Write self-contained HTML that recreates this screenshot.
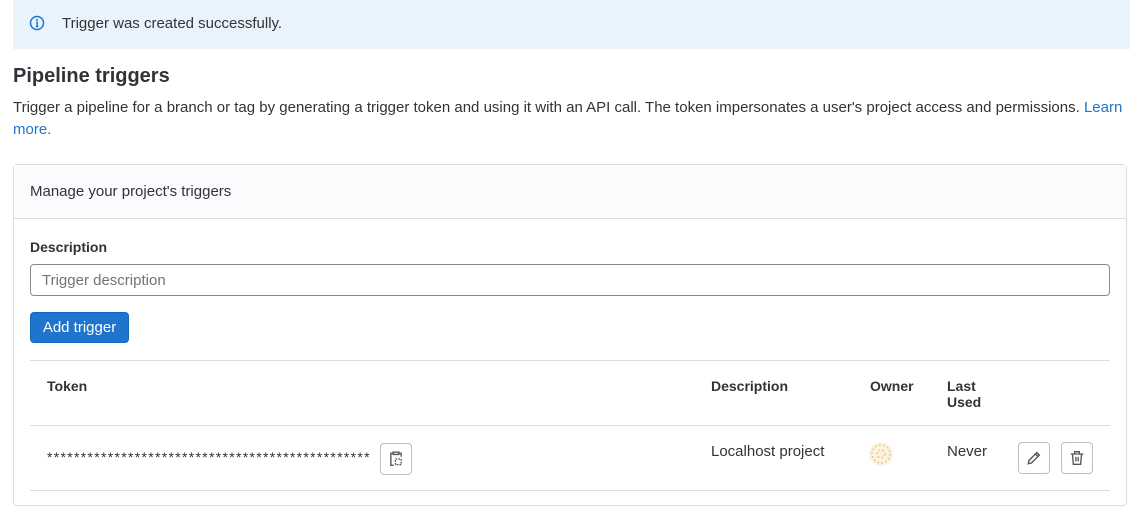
<!DOCTYPE html>
<html><head><style>
body{margin:0;width:1130px;height:496px;overflow:hidden;background:#fff;font-family:"Liberation Sans",sans-serif;color:#333238;font-size:15px}
.abs{position:absolute}
.banner{left:13px;top:0;width:1117px;height:49px;background:#e9f3fc}
h1{position:absolute;left:13px;top:65px;margin:0;font-size:20px;font-weight:bold;color:#333238}
.p{left:13px;top:97px;width:1112px;line-height:22px;font-size:15px}
a{color:#1f75cb;text-decoration:none}
.card{left:13px;top:164px;width:1112px;height:340px;border:1px solid #dcdcde;border-radius:4px}
.ch{left:0;top:0;width:1112px;height:53px;background:#fbfafd;border-bottom:1px solid #dcdcde}
.inp{left:30px;top:264px;width:1078px;height:30px;border:1px solid #89888d;border-radius:4px;color:#737278;line-height:31px;text-indent:11px}
.btn{left:30px;top:312px;width:99px;height:31px;background:#1f75cb;border-radius:4px;color:#fff;text-align:center;line-height:30px;border:1px solid #1068bf;box-sizing:border-box}
.hr{left:30px;width:1080px;height:1px;background:#dcdcde}
.b{font-weight:bold;font-size:14px}
.ib{width:32px;height:32px;border:1px solid #bfbfc3;border-radius:4px;box-sizing:border-box;display:flex;align-items:center;justify-content:center}
</style></head><body>
<div class="abs banner"></div>
<svg class="abs" style="left:29px;top:15px" width="16" height="16" viewBox="0 0 16 16"><circle cx="8" cy="8" r="6.5" fill="none" stroke="#1f75cb" stroke-width="1.5"/><circle cx="8" cy="5" r="1" fill="#1f75cb"/><path d="M7 7.5h1.2v4M6.8 11.5h2.6" stroke="#1f75cb" stroke-width="1.4" fill="none"/></svg>
<div class="abs" style="left:62px;top:15px">Trigger was created successfully.</div>
<h1>Pipeline triggers</h1>
<div class="abs p">Trigger a pipeline for a branch or tag by generating a trigger token and using it with an API call. The token impersonates a user's project access and permissions. <a>Learn more.</a></div>
<div class="abs card"><div class="abs ch"></div></div>
<div class="abs" style="left:30px;top:183px">Manage your project's triggers</div>
<div class="abs b" style="left:30px;top:239px">Description</div>
<div class="abs inp">Trigger description</div>
<div class="abs btn">Add trigger</div>
<div class="abs hr" style="top:360px"></div>
<div class="abs b" style="left:47px;top:378px">Token</div>
<div class="abs b" style="left:711px;top:378px">Description</div>
<div class="abs b" style="left:870px;top:378px">Owner</div>
<div class="abs b" style="left:947px;top:378px;line-height:16px">Last<br>Used</div>
<div class="abs hr" style="top:425px"></div>
<div class="abs" style="left:47px;top:449px;font-size:14px;letter-spacing:1.3px">************************************************</div>
<div class="abs ib" style="left:380px;top:443px"><svg width="16" height="16" viewBox="0 0 14 14" fill="none" stroke="#555" stroke-width="1.2"><path d="M4 2H2.5v10.5H5M10 2h1.5v3"/><rect x="4.5" y="1" width="5" height="2"/><rect x="6.5" y="7" width="5" height="5" stroke-dasharray="1.5 1"/></svg></div>
<div class="abs" style="left:711px;top:443px">Localhost project</div>
<svg class="abs" style="left:869px;top:442px" width="24" height="24"><circle cx="12" cy="12" r="12" fill="#fbf3e2"/><circle cx="12" cy="12" r="9" fill="none" stroke="#ecc98a" stroke-width="1.5" stroke-dasharray="2 2"/><circle cx="12" cy="12" r="4" fill="none" stroke="#ecc98a" stroke-width="1.5" stroke-dasharray="2 2"/></svg>
<div class="abs" style="left:947px;top:443px">Never</div>
<div class="abs ib" style="left:1018px;top:442px"><svg width="16" height="16" viewBox="0 0 14 14" fill="none" stroke="#555" stroke-width="1.2"><path d="M2 12l.6-2.8L9.5 2.3l2.2 2.2-6.9 6.9zM8.3 3.5l2.2 2.2"/></svg></div>
<div class="abs ib" style="left:1061px;top:442px"><svg width="16" height="16" viewBox="0 0 14 14" fill="none" stroke="#555" stroke-width="1.2"><path d="M1.5 3.5h11M5 3.5V1.5h4v2M3 3.5l.8 9h6.4l.8-9M6 6v4M8 6v4"/></svg></div>
<div class="abs hr" style="top:490px"></div>
</body></html>
